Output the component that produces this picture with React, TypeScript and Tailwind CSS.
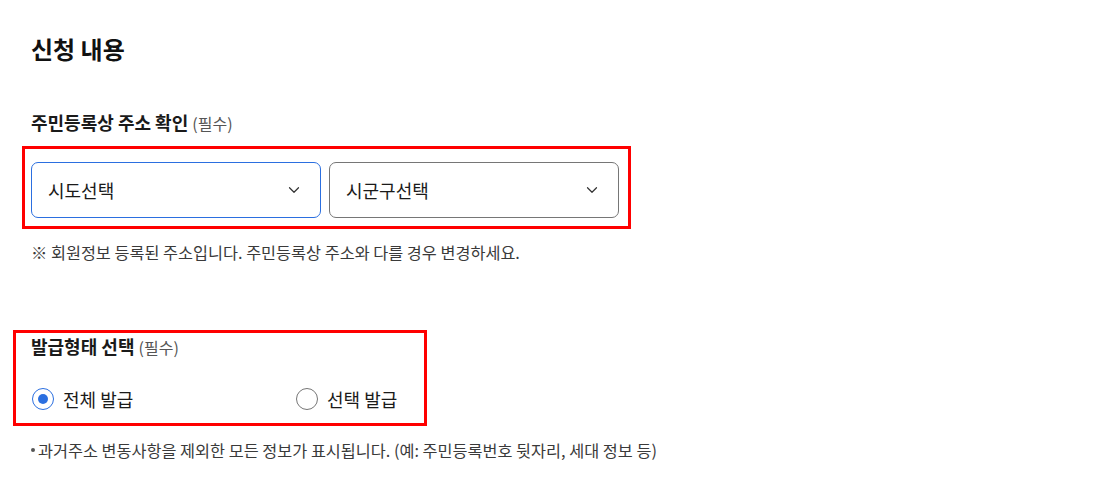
import { ChevronDown } from "lucide-react";

const font = "font-['Noto_Sans_CJK_KR','Noto_Sans',sans-serif]";

function SelectBox({ label, active }: { label: string; active?: boolean }) {
  return (
    <div
      className={
        "flex h-[56px] w-[290px] items-center justify-between rounded-[7px] border bg-white pl-[16px] pr-[17px] " +
        (active ? "border-[#2b6fe0]" : "border-[#767676]")
      }
    >
      <span className="text-[18px] leading-[24px] text-[#1a1a1a]">{label}</span>
      <ChevronDown className="h-[18px] w-[18px] text-[#333]" strokeWidth={1.6} />
    </div>
  );
}

function Radio({ label, checked }: { label: string; checked?: boolean }) {
  return (
    <label className="flex items-center gap-[9px]">
      <span
        className={
          "flex h-[22px] w-[22px] items-center justify-center rounded-full border-[1.5px] " +
          (checked ? "border-[#2b6fe0]" : "border-[#767676]")
        }
      >
        {checked && <span className="h-[10px] w-[10px] rounded-full bg-[#2b6fe0]" />}
      </span>
      <span className="text-[18px] leading-[24px] text-[#1a1a1a]">{label}</span>
    </label>
  );
}

export default function App() {
  return (
    <div className={"min-h-[490px] w-full bg-white pl-[31px] pt-[34px] " + font}>
      <h2 className="text-[24px] font-bold leading-[30px] text-[#111]">신청 내용</h2>

      <div className="mt-[46px] text-[18px] font-bold leading-[24px] text-[#1a1a1a]">
        주민등록상 주소 확인{" "}
        <span className="text-[16px] font-normal text-[#555]">(필수)</span>
      </div>

      <div className="-ml-[9px] mt-[11px] flex w-[609px] gap-[8px] border-[3px] border-[#ff0000] pb-[8px] pl-[6px] pt-[13px]">
        <SelectBox label="시도선택" active />
        <SelectBox label="시군구선택" />
      </div>

      <p className="mt-[12px] text-[16.3px] leading-[22px] text-[#3a3a3a]">
        ※ 회원정보 등록된 주소입니다. 주민등록상 주소와 다를 경우 변경하세요.
      </p>

      <div className="-ml-[18px] mt-[67px] w-[414px] border-[3px] border-[#ff0000] pb-[12px] pl-[15px] pt-[1px]">
        <div className="text-[18px] font-bold leading-[24px] text-[#1a1a1a]">
          발급형태 선택{" "}
          <span className="text-[16px] font-normal text-[#555]">(필수)</span>
        </div>
        <div className="mt-[28px] flex pl-[1px]">
          <div className="w-[264px]">
            <Radio label="전체 발급" checked />
          </div>
          <Radio label="선택 발급" />
        </div>
      </div>

      <p className="mt-[13px] flex items-center text-[16.3px] leading-[22px] text-[#3a3a3a]">
        <span className="mr-[3px] h-[4px] w-[4px] rounded-full bg-[#555]" />
        과거주소 변동사항을 제외한 모든 정보가 표시됩니다. (예: 주민등록번호 뒷자리, 세대 정보 등)
      </p>
    </div>
  );
}
